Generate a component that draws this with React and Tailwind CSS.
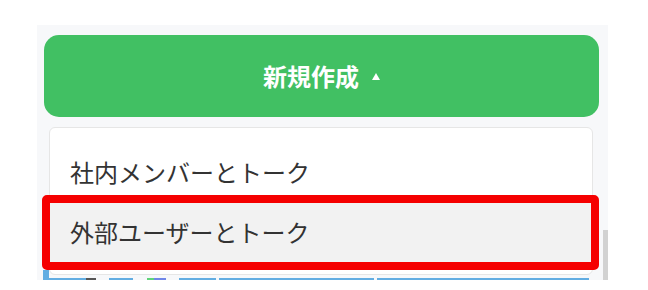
import React from 'react';

const items = ['社内メンバーとトーク', '外部ユーザーとトーク'];

// bits of the list that peeks out under the menu
const strip = [
  { w: 'w-[37px]', c: 'bg-[#62ade2]' },
  { w: 'w-[10px]', c: 'bg-[#555]' },
  { w: 'w-[13px]', c: 'bg-transparent' },
  { w: 'w-[24px]', c: 'bg-[#62ade2]' },
  { w: 'w-[14px]', c: 'bg-transparent' },
  { w: 'w-[7px]', c: 'bg-[#5fd37a]' },
  { w: 'w-[12px]', c: 'bg-[#6f86e8]' },
  { w: 'w-[13px]', c: 'bg-transparent' },
  { w: 'w-[37px]', c: 'bg-[#62ade2]' },
  { w: 'w-[3px]', c: 'bg-transparent' },
  { w: 'w-[155px]', c: 'bg-[#62ade2]' },
  { w: 'w-[3px]', c: 'bg-transparent' },
  { w: 'w-[212px]', c: 'bg-[#62ade2]' },
];

export default function App() {
  return (
    <div className="w-[648px] h-[290px] bg-white pt-[25px] pl-[37px] font-['Noto_Sans_CJK_JP','Noto_Sans',sans-serif]">
      <div className="flex w-[571px] h-[255px] overflow-hidden bg-[#f7f8fa]">
        <div className="flex flex-1 flex-col pt-[10px] pl-[7px] pr-[4px]">
          {/* New button */}
          <button className="flex h-[82px] w-full shrink-0 items-center justify-center gap-[13px] rounded-[15px] bg-[#41c063] text-[24px] font-bold text-white">
            <span className="leading-none">新規作成</span>
            <svg width="8" height="7" viewBox="0 0 8 7" className="mt-[1px]">
              <polygon points="4,0 8,7 0,7" fill="white" />
            </svg>
          </button>

          {/* list under the menu, menu on top */}
          <div className="relative flex flex-1 flex-col justify-end">
            <div className="-ml-[1px] flex h-[10px] items-end">
              <div className="h-full w-[6px] bg-[#62ade2]" />
              {strip.map((s, i) => (
                <div key={i} className={`${s.w} h-[2px] ${s.c}`} />
              ))}
            </div>

            <div className="absolute left-[5px] right-[6px] top-[10px] rounded-[6px] border border-[#e6e6e6] bg-white pt-[14px] pb-[12px]">
              {items.map((label, i) => (
                <div
                  key={label}
                  className={`relative flex h-[60px] items-center pl-[20px] text-[24px] text-[#333] ${i === 1 ? 'bg-[#f2f2f2]' : ''}`}
                >
                  <span className="leading-none">{label}</span>
                  {i === 1 && (
                    <div className="absolute -left-[8px] -right-[7px] -top-[7px] -bottom-[8px] rounded-[5px] border-[8px] border-[#f50000]" />
                  )}
                </div>
              ))}
            </div>
          </div>
        </div>

        {/* scrollbar */}
        <div className="flex w-[5px] flex-col justify-end">
          <div className="h-[50px] bg-[#d2d2d2]" />
        </div>
      </div>
    </div>
  );
}
